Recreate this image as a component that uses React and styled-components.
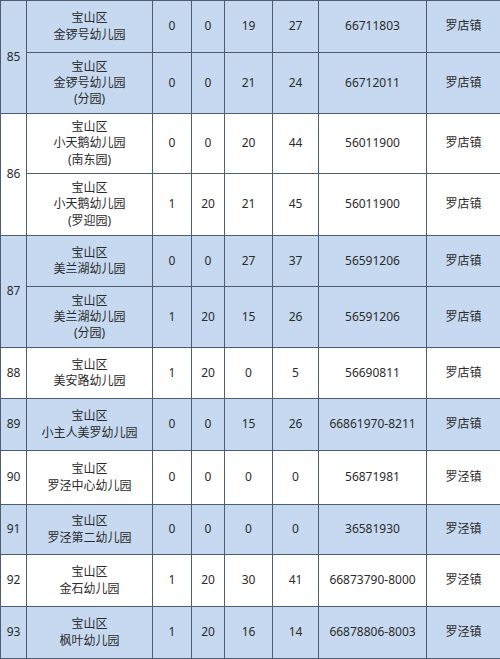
import React from 'react'
import styled, { createGlobalStyle } from 'styled-components'

const GlobalStyle = createGlobalStyle`
    html, body {
        margin: 0;
        padding: 0;
        background: #fff;
    }
    body {
        font-family: "Noto Sans", "Noto Sans CJK SC", sans-serif;
    }
`

const cols = [26, 126, 39, 33, 48, 46, 108, 74]

const groups = [
    { no: 85, town: '罗店镇', rows: [
        { h: 52, name: ['宝山区', '金锣号幼儿园'], v: [0, 0, 19, 27], tel: '66711803' },
        { h: 61, name: ['宝山区', '金锣号幼儿园', '(分园)'], v: [0, 0, 21, 24], tel: '66712011' },
    ] },
    { no: 86, town: '罗店镇', rows: [
        { h: 60, name: ['宝山区', '小天鹅幼儿园', '(南东园)'], v: [0, 0, 20, 44], tel: '56011900' },
        { h: 62, name: ['宝山区', '小天鹅幼儿园', '(罗迎园)'], v: [1, 20, 21, 45], tel: '56011900' },
    ] },
    { no: 87, town: '罗店镇', rows: [
        { h: 51, name: ['宝山区', '美兰湖幼儿园'], v: [0, 0, 27, 37], tel: '56591206' },
        { h: 61, name: ['宝山区', '美兰湖幼儿园', '(分园)'], v: [1, 20, 15, 26], tel: '56591206' },
    ] },
    { no: 88, town: '罗店镇', rows: [
        { h: 51, name: ['宝山区', '美安路幼儿园'], v: [1, 20, 0, 5], tel: '56690811' },
    ] },
    { no: 89, town: '罗店镇', rows: [
        { h: 52, name: ['宝山区', '小主人美罗幼儿园'], v: [0, 0, 15, 26], tel: '66861970-8211' },
    ] },
    { no: 90, town: '罗泾镇', rows: [
        { h: 54, name: ['宝山区', '罗泾中心幼儿园'], v: [0, 0, 0, 0], tel: '56871981' },
    ] },
    { no: 91, town: '罗泾镇', rows: [
        { h: 50, name: ['宝山区', '罗泾第二幼儿园'], v: [0, 0, 0, 0], tel: '36581930' },
    ] },
    { no: 92, town: '罗泾镇', rows: [
        { h: 52, name: ['宝山区', '金石幼儿园'], v: [1, 20, 30, 41], tel: '66873790-8000' },
    ] },
    { no: 93, town: '罗泾镇', rows: [
        { h: 52, name: ['宝山区', '枫叶幼儿园'], v: [1, 20, 16, 14], tel: '66878806-8003' },
    ] },
]

const Table = styled.table`
    width: 500px;
    table-layout: fixed;
    border-collapse: collapse;
    font-size: 12px;
    line-height: 16.3px;
    color: #2b2b2b;
`

const Row = styled.tr`
    background: ${p => (p.$shaded ? '#c6d9f0' : '#ffffff')};
`

const Cell = styled.td`
    border: 1px solid #4e5c70;
    padding: 0;
    text-align: center;
    vertical-align: middle;
    white-space: nowrap;
`

const Line = styled.div``

function App() {
    return (
        <>
            <GlobalStyle />
            <Table>
                <colgroup>
                    {cols.map((w, i) => <col key={i} style={{ width: w }} />)}
                </colgroup>
                <tbody>
                    {groups.map((g, gi) =>
                        g.rows.map((r, ri) => (
                            <Row key={`${g.no}-${ri}`} $shaded={gi % 2 === 0} style={{ height: r.h }}>
                                {ri === 0 && <Cell rowSpan={g.rows.length}>{g.no}</Cell>}
                                <Cell>
                                    {r.name.map((n, i) => <Line key={i}>{n}</Line>)}
                                </Cell>
                                {r.v.map((v, i) => <Cell key={i}>{v}</Cell>)}
                                <Cell>{r.tel}</Cell>
                                <Cell>{g.town}</Cell>
                            </Row>
                        ))
                    )}
                </tbody>
            </Table>
        </>
    )
}

export default App
